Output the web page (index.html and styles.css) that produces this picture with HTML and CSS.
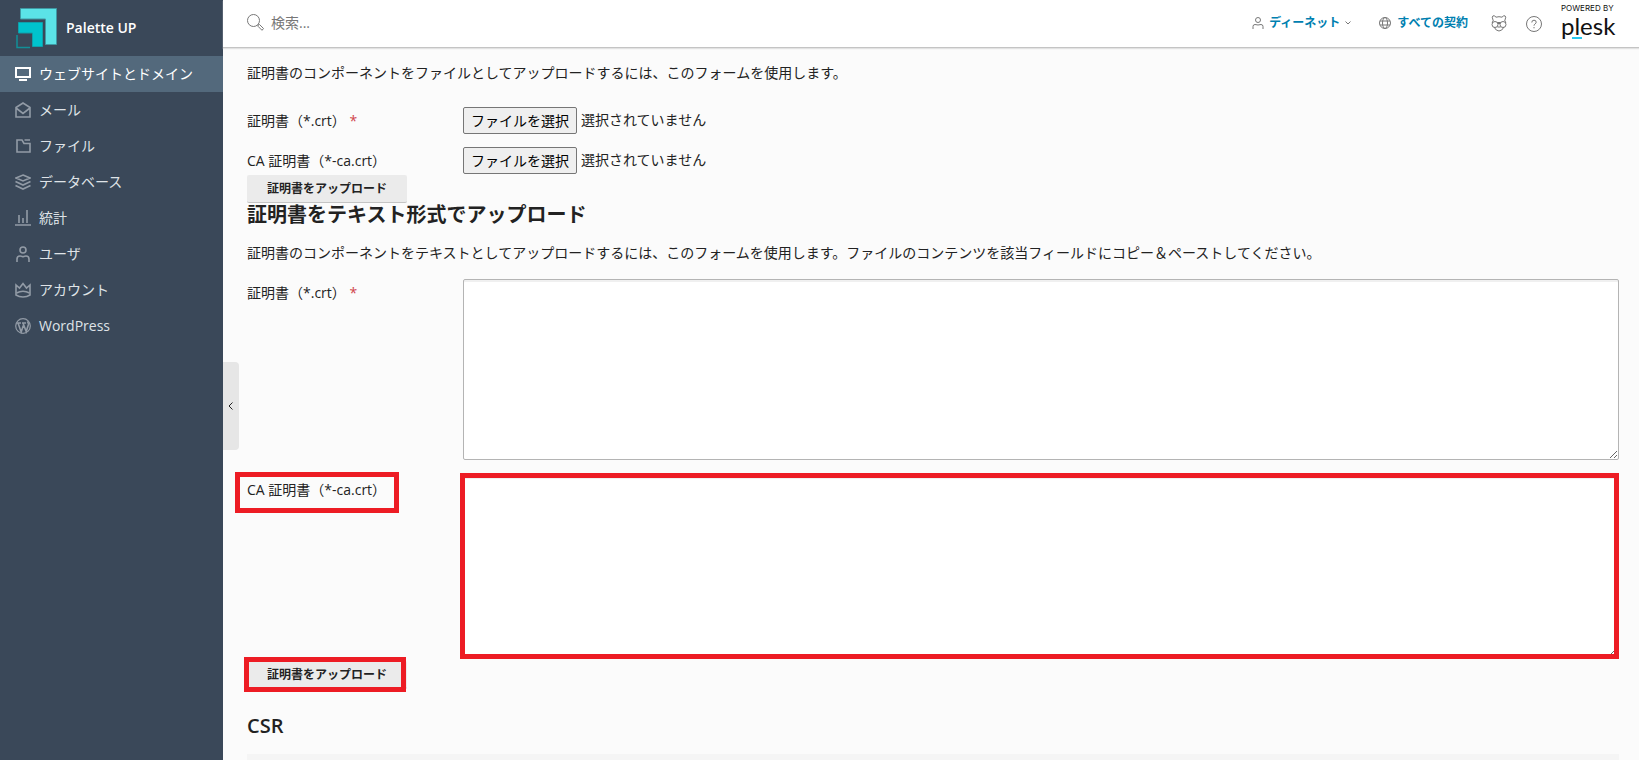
FILE: index.html
```html
<!DOCTYPE html>
<html lang="ja">
<head>
  <meta charset="UTF-8">
  <meta name="viewport" content="width=device-width, initial-scale=1.0">
  <title>Palette UP - 証明書</title>
  <link rel="stylesheet" href="styles.css">
</head>
<body>

  <aside class="sidebar">
    <a class="brand" href="#">
      <svg width="42" height="42" viewBox="0 0 42 42">
        <path d="M4.500 12V1.500h36v36H29.500V12z" fill="#5be3e7" stroke="#3f98a3"/>
        <path d="M2.500 15.500h24v24H16.500V26H2.500z" fill="#00c3cd" stroke="#0fa0ab"/>
        <path d="M1 28v12.500h13" fill="none" stroke="#128f98" stroke-width="1.500"/>
      </svg>
      <span>Palette UP</span>
    </a>
    <nav class="nav">
      <a class="nav-item active" href="#">
        <svg class="icon" viewBox="0 0 16 16"><path d="M1 2h14v9H1z" stroke-width="2"/><path d="M4 14h8" stroke-width="2"/></svg>
        ウェブサイトとドメイン
      </a>
      <a class="nav-item" href="#">
        <svg class="icon" viewBox="0 0 16 16"><path d="M1 5.500 8 1l7 4.500V15H1zM1 6l7 5.500L15 6"/></svg>
        メール
      </a>
      <a class="nav-item" href="#">
        <svg class="icon" viewBox="0 0 16 16"><path d="M2 2h5l2 3.500h6V14H2zM9.500 2H15"/></svg>
        ファイル
      </a>
      <a class="nav-item" href="#">
        <svg class="icon" viewBox="0 0 16 16"><path d="M8 1l7 3-7 3-7-3zM.5 7.500l7.500 3.500 7.500-3.500M.5 11.500 8 15l7.500-3.500"/></svg>
        データベース
      </a>
      <a class="nav-item" href="#">
        <svg class="icon" viewBox="0 0 16 16"><path d="M0 15h16M4 5v8M8 8v5M12 0v13"/></svg>
        統計
      </a>
      <a class="nav-item" href="#">
        <svg class="icon" viewBox="0 0 16 16"><circle cx="8" cy="4" r="3"/><path d="M2 16v-3q0-3 3-3 1 0 3 .8 2-.8 3-.8 3 0 3 3v3"/></svg>
        ユーザ
      </a>
      <a class="nav-item" href="#">
        <svg class="icon" viewBox="0 0 16 16"><path d="M1 3v10q3 2 7 2t7-2V3l-3.500 3L8 1.500 4.500 6z"/><path d="M1.500 11q6.500-3.500 13 0"/></svg>
        アカウント
      </a>
      <a class="nav-item" href="#">
        <svg class="icon" viewBox="0 0 16 16"><circle cx="8" cy="8" r="7.300" stroke-width="1.200"/><path d="M2 5h4M7 5h4M3 5l3.200 9L8.300 7.500M8 5l3.200 8.500L13.300 7q.5-2-1-3.500"/></svg>
        WordPress
      </a>
    </nav>
  </aside>

  <div class="page">
    <header class="topbar">
      <div class="search">
        <svg width="17" height="17" viewBox="0 0 17 17"><circle cx="6.500" cy="6.500" r="6"/><path d="M11 11l1.500-.5 4 4-1.500 1.800-4-4z"/></svg>
        <input type="text" placeholder="検索..." aria-label="検索">
      </div>
      <div class="tools">
        <a class="tool-link" href="#">
          <svg width="12" height="12" viewBox="0 0 12 12"><circle cx="6" cy="3" r="2.500"/><path d="M1 12V9.500Q1 7.500 3 7.500l3 .5 3-.5q2 0 2 2V12"/></svg>
          ディーネット
          <svg class="caret" width="6" height="4" viewBox="0 0 6 4"><path d="M.5.500 3 3 5.500.5"/></svg>
        </a>
        <a class="tool-link contracts" href="#">
          <svg width="12" height="12" viewBox="0 0 12 12"><circle cx="6" cy="6" r="5.500"/><ellipse cx="6" cy="6" rx="2.500" ry="5.500"/><path d="M1 4h10M1 8h10"/></svg>
          すべての契約
        </a>
        <button class="icon-button" type="button" aria-label="Advisor">
          <svg width="16" height="17" viewBox="0 0 16 17"><path d="M2 5Q.5 1.500 2 .8 4 .5 5 2.200q3-1 6 0Q12 .5 14 .8 15.500 1.500 14 5"/><path d="M2.500 5Q1.500 6 1.200 8M13.500 5q1 1 1.300 3M3 12q2 4 5 4t5-4"/><circle cx="4" cy="9.500" r="3"/><circle cx="12" cy="9.500" r="3"/><path d="M6.500 7.500h3L8 9zM6.500 12h3"/></svg>
        </button>
        <button class="icon-button" type="button" aria-label="ヘルプ">
          <svg width="16" height="16" viewBox="0 0 16 16"><circle cx="8" cy="8" r="7.500"/><path d="M5.800 6.500q0-2.300 2.200-2.300t2.200 2q0 1-1.200 1.800-1 .7-1 1.700M8 11v1.300"/></svg>
        </button>
        <a class="plesk" href="#">
          <small>POWERED BY</small>
          <span>plesk</span>
        </a>
      </div>
    </header>

    <main class="content">
      <button class="collapse" type="button" aria-label="サイドバーを閉じる">
        <svg width="5" height="8" viewBox="0 0 5 8"><path d="M4.500.500 1 4l3.500 3.500"/></svg>
      </button>

      <form>
        <p class="hint">証明書のコンポーネントをファイルとしてアップロードするには、このフォームを使用します。</p>
        <div class="row">
          <label for="crt-file">証明書（*.crt） <span class="required">*</span></label>
          <div class="file">
            <input type="file" id="crt-file">
            <span class="file-button">ファイルを選択</span>
            <span>選択されていません</span>
          </div>
        </div>
        <div class="row">
          <label for="ca-file">CA 証明書（*-ca.crt）</label>
          <div class="file">
            <input type="file" id="ca-file">
            <span class="file-button">ファイルを選択</span>
            <span>選択されていません</span>
          </div>
        </div>
        <button class="button" type="button">証明書をアップロード</button>
      </form>

      <form class="text-form">
        <h2>証明書をテキスト形式でアップロード</h2>
        <p class="hint">証明書のコンポーネントをテキストとしてアップロードするには、このフォームを使用します。ファイルのコンテンツを該当フィールドにコピー＆ペーストしてください。</p>
        <div class="row text-row">
          <label for="crt-text">証明書（*.crt） <span class="required">*</span></label>
          <div class="field"><textarea id="crt-text"></textarea></div>
        </div>
        <div class="row text-row">
          <label class="mark mark-label" for="ca-text">CA 証明書（*-ca.crt）</label>
          <div class="field mark mark-field"><textarea id="ca-text"></textarea></div>
        </div>
        <div class="actions mark mark-button">
          <button class="button" type="button">証明書をアップロード</button>
        </div>
      </form>

      <h2 class="csr-title">CSR</h2>
      <section class="csr"></section>
    </main>
  </div>

</body>
</html>
```
FILE: styles.css
```css
* {
  box-sizing: border-box;
}

body {
  margin: 0;
  display: flex;
  min-height: 100vh;
  background: #fbfbfb;
  color: #222;
  font-family: "Open Sans", "Noto Sans CJK JP", sans-serif;
  font-size: 14px;
  line-height: 20px;
}

a {
  color: inherit;
  text-decoration: none;
}

button, input, textarea {
  font: inherit;
  color: inherit;
}

svg {
  flex: none;
  fill: none;
  stroke: #777;
}

/* sidebar */
.sidebar {
  flex: none;
  width: 223px;
  background: #3a4859;
  color: #dfe3e7;
}

.brand {
  display: flex;
  align-items: center;
  gap: 8px;
  height: 56px;
  padding: 0 16px;
  color: #fff;
  font-weight: 600;
}

.nav-item {
  display: flex;
  align-items: center;
  gap: 8px;
  height: 36px;
  padding: 0 15px;
}

.nav-item.active {
  background: #53697c;
  color: #fff;
}

.icon {
  width: 16px;
  height: 16px;
  stroke: #929ba6;
  stroke-width: 1.6;
}

.active .icon {
  stroke: #fff;
}

/* top bar */
.page {
  flex: 1;
  min-width: 0;
  display: flex;
  flex-direction: column;
}

.topbar {
  display: flex;
  justify-content: space-between;
  height: 48px;
  padding: 0 20px 0 24px;
  background: #fff;
  border-bottom: 1px solid #c4c4c4;
  box-shadow: 0 1px 1px #e2e2e2;
}

.search {
  display: flex;
  align-items: center;
  gap: 5px;
  padding-bottom: 2px;
}

.search input {
  width: 240px;
  border: 0;
  outline: 0;
  background: none;
}

.search input::placeholder {
  color: #777;
}

.tools {
  display: flex;
  align-items: center;
}

.tool-link {
  display: flex;
  align-items: center;
  gap: 5px;
  padding-bottom: 2px;
  color: #0080b0;
  font-size: 12px;
  font-weight: 600;
}

.contracts {
  margin: 0 23px 0 28px;
  gap: 6px;
}

.icon-button {
  display: flex;
  margin-right: 19px;
  padding: 0;
  border: 0;
  background: none;
}

.plesk {
  width: 58px;
  padding-bottom: 5px;
  color: #111;
}

.plesk small {
  display: block;
  font-family: Inter, sans-serif;
  font-size: 8px;
  line-height: 9px;
  white-space: nowrap;
}

.plesk span {
  position: relative;
  display: block;
  font-family: Lato, sans-serif;
  font-size: 24px;
  line-height: 26px;
}

.plesk span::after {
  content: "";
  position: absolute;
  left: 11px;
  bottom: 0;
  width: 10px;
  height: 2px;
  background: #28c8f0;
}

/* content */
.content {
  position: relative;
  flex: 1;
  display: flex;
  flex-direction: column;
  padding: 15px 20px 0 24px;
}

.collapse {
  position: absolute;
  top: 314px;
  left: 0;
  display: flex;
  align-items: center;
  justify-content: center;
  width: 16px;
  height: 88px;
  padding: 0 2px 0 0;
  border: 0;
  border-radius: 0 4px 4px 0;
  background: #e6e6e6;
}

.collapse svg {
  stroke: #222;
}

.hint {
  margin: 0 0 24px;
}

.row {
  display: grid;
  grid-template-columns: 216px 1fr;
  align-items: center;
  margin-bottom: 13px;
}

.row:has(+ .button) {
  margin-bottom: 1px;
}

.required {
  color: #d0444c;
}

.file {
  position: relative;
  display: flex;
  align-items: start;
  gap: 4px;
  line-height: 25px;
}

/* the native picker lies invisible over the drawn button */
.file input {
  position: absolute;
  inset: 0;
  width: 114px;
  opacity: 0;
}

.file-button {
  height: 27px;
  padding: 0 7px;
  border: 1px solid #767676;
  border-radius: 2px;
  background: #efefef;
  color: #000;
}

.button {
  display: block;
  height: 28px;
  padding: 0 20px;
  border: 0;
  border-bottom: 1px solid #c4c4c4;
  border-radius: 2px;
  background: #ebebeb;
  font-size: 12px;
  font-weight: 600;
}

h2 {
  margin: 0;
  font-size: 20px;
  font-weight: 600;
  line-height: 24px;
}

.text-form .hint {
  margin: 16px 0;
}

.text-row {
  align-items: start;
  margin-bottom: 16px;
}

.text-row label {
  margin-top: 4px;
}

textarea {
  display: block;
  width: 100%;
  height: 181px;
  border: 1px solid #b4b4b4;
  border-radius: 2px;
  background: #fff;
  box-shadow: inset 0 2px 0 #f0f0f0;
}

.actions {
  width: 160px;
  margin-top: -12px;
}

/* red frames round the fields to fill in */
.mark {
  position: relative;
}

.mark::after {
  content: "";
  position: absolute;
  border: 5px solid #ed1c24;
  pointer-events: none;
}

.mark-label::after {
  inset: -8px 64px -13px -12px;
}

.mark-field::after {
  inset: -3px 0 -2px -3px;
}

.mark-button::after {
  inset: -4px 1px -3px -3px;
}

.csr-title {
  margin: 25px 0 16px;
}

.csr {
  flex: 1;
  background: #f5f5f5;
}
```
